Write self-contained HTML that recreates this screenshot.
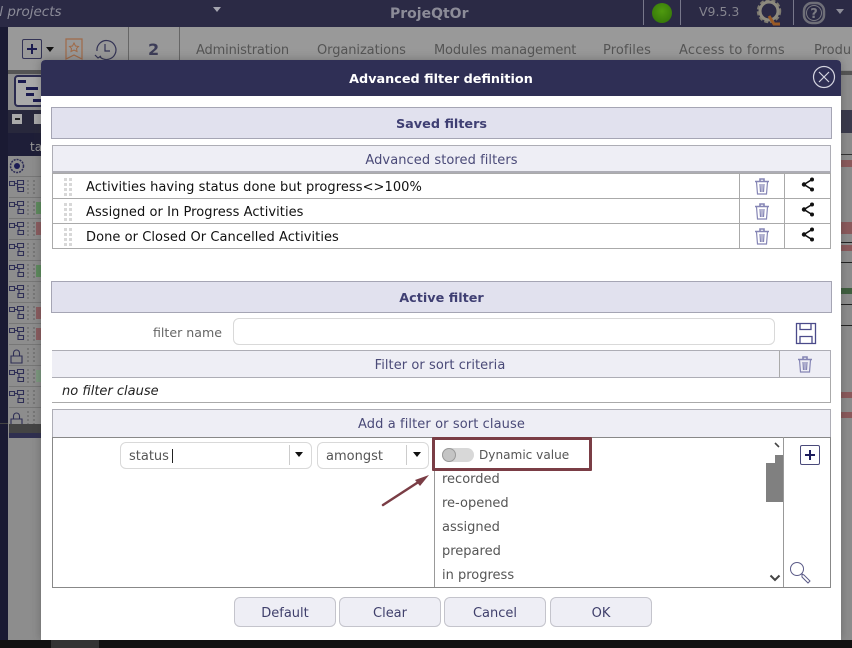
<!DOCTYPE html>
<html><head><meta charset="utf-8"><style>
html,body{margin:0;padding:0}
body{width:852px;height:648px;position:relative;overflow:hidden;background:#8d8d8d;font-family:"DejaVu Sans",sans-serif;font-size:13px;color:#555}
div,span,svg{position:absolute;box-sizing:border-box}
.t{white-space:nowrap;line-height:16px}
.hd{background:#e1e1ee;border:1px solid #a5a5b4;color:#3f3f73;font-weight:bold;text-align:center;line-height:34px;font-size:12.8px}
.sub{background:#eeeef5;border:1px solid #adadb5;color:#4a4a78;text-align:center;letter-spacing:.07px;line-height:29px}
.row{left:52px;width:779px;height:26px;background:#fff;border:1px solid #aaa}
.row .t{left:33px;top:6px;color:#111;letter-spacing:.06px}
.v{top:0;bottom:0;width:1px;background:#aaa}
.btn{top:597px;height:30px;width:102px;background:#eeeef5;border:1px solid #c4c4cc;border-radius:6px;color:#3f3f6b;text-align:center;line-height:31px}
.nav{top:43px;color:#555;white-space:nowrap;line-height:16px}
.opt{left:442px;color:#555;white-space:nowrap;line-height:16px}
.inp{background:#fff;border:1px solid #d9d9d9;border-radius:6px}
.tri{width:0;height:0;border-left:4px solid transparent;border-right:4px solid transparent;border-top:5px solid #111}
.sc{left:9px;width:32px;height:1px;background:#777}
</style></head><body>
<div style="left:0;top:0;width:852px;height:27px;background:#2b2a45"></div>
<div class="t" style="left:-5px;top:4px;font-style:italic;color:#8b8b98;font-size:13.500px">&nbsp;l projects</div>
<div class="tri" style="left:213px;top:7px;border-top-color:#a5a5b0"></div>
<div class="t" style="left:390px;top:6px;font-weight:bold;color:#8c8c98;font-size:14px">ProjeQtOr</div>
<div style="left:643px;top:0;width:1px;height:25px;background:#77778a"></div>
<div style="left:680px;top:0;width:1px;height:25px;background:#77778a"></div>
<div style="left:793px;top:0;width:1px;height:25px;background:#77778a"></div>
<div style="left:652px;top:3px;width:20px;height:20px;border-radius:50%;background:radial-gradient(circle at 50% 40%,#4f9a0f,#2f6f08)"></div>
<div class="t" style="left:699px;top:4px;color:#85858f;font-size:12.500px">V9.5.3</div>
<svg style="left:754px;top:0" width="32" height="27"><circle cx="15" cy="11" r="11" fill="none" stroke="#7d7a70" stroke-width="2.500" stroke-dasharray="4 2"/><circle cx="15" cy="11" r="9" fill="none" stroke="#8d8a7e" stroke-width="3"/><path d="M15 16l5 8h6" stroke="#9a5a25" stroke-width="3" fill="none"/></svg>
<svg style="left:802px;top:0" width="24" height="25"><rect x="2" y="3" width="20" height="20" rx="8" fill="none" stroke="#6f6f78" stroke-width="2.500"/><circle cx="12" cy="13" r="7.500" fill="none" stroke="#7a7a82" stroke-width="1"/><text x="12" y="18" text-anchor="middle" font-family="DejaVu Sans" font-weight="bold" font-size="13" fill="#7a7a82">?</text></svg>
<div class="tri" style="left:836px;top:9px;border-top-color:#8d8d99"></div>

<div style="left:0;top:27px;width:8px;height:621px;background:#1a1a33"></div>
<div style="left:8px;top:27px;width:844px;height:43px;background:#999"></div>
<div style="left:128px;top:27px;width:1px;height:33px;background:#666"></div>
<div style="left:179px;top:27px;width:1px;height:33px;background:#666"></div>
<div style="left:22px;top:39px;width:20px;height:20px;border:1px solid #333355;border-radius:2px"></div>
<svg style="left:22px;top:39px" width="20" height="20"><path d="M10 5v10M5 10h10" stroke="#1c1c50" stroke-width="2"/></svg>
<div class="tri" style="left:46px;top:47px"></div>
<svg style="left:65px;top:38px" width="20" height="22"><path d="M1 1h16v20l-8-4-8 4z" fill="none" stroke="#a06a48" stroke-width="1.200"/><path d="M9 5l1.500 3 3 .5-2 2 .5 3-3-1.500-3 1.500.5-3-2-2 3-.5z" fill="none" stroke="#a06a48"/></svg>
<svg style="left:94px;top:38px" width="24" height="22"><path d="M6 19a9.500 9.500 0 1 0-3-6" fill="none" stroke="#333355" stroke-width="1.200"/><path d="M11 6v7h5M1 17l3 3 3-2" fill="none" stroke="#333355" stroke-width="1.200"/></svg>
<div class="t" style="left:148px;top:42px;font-size:16px;font-weight:bold;color:#3d3d58">2</div>
<div class="nav" style="left:196px;letter-spacing:-.15px">Administration</div>
<div class="nav" style="left:317px;letter-spacing:-.08px">Organizations</div>
<div class="nav" style="left:434px;letter-spacing:-.17px">Modules management</div>
<div class="nav" style="left:603px;letter-spacing:.1px">Profiles</div>
<div class="nav" style="left:679px;letter-spacing:.2px">Access to forms</div>
<div class="nav" style="left:814px">Produ</div>

<div style="left:8px;top:70px;width:33px;height:4px;background:#555"></div>
<div style="left:14px;top:75px;width:30px;height:32px;border:2px solid #2b2b50;border-radius:4px;background:#aaa"></div>
<div style="left:18px;top:80px;width:8px;height:3px;background:#1b1b50"></div>
<div style="left:26px;top:87px;width:12px;height:3px;background:#1b1b50"></div>
<div style="left:26px;top:93px;width:8px;height:3px;background:#1b1b50"></div>
<div style="left:33px;top:99px;width:8px;height:3px;background:#1b1b50"></div>
<div style="left:8px;top:110px;width:33px;height:23px;background:#28283c"></div>
<div style="left:12px;top:114px;width:10px;height:10px;background:#aaa"></div>
<div style="left:15px;top:118px;width:5px;height:2px;background:#222"></div>
<div style="left:34px;top:114px;width:7px;height:10px;background:#aaa"></div>
<div style="left:8px;top:133px;width:33px;height:23px;background:#1e1e38"></div>
<div class="t" style="left:30px;top:139px;color:#999;font-size:12px">ta</div>
<svg style="left:9px;top:157px" width="22" height="18"><circle cx="8" cy="9" r="6.500" fill="none" stroke="#2c2c55" stroke-width="1.500" stroke-dasharray="2 1"/><circle cx="8" cy="9" r="3" fill="#1c1c55"/></svg>
<div class="sc" style="top:176px"></div><div class="sc" style="top:197px"></div><div class="sc" style="top:218px"></div><div class="sc" style="top:239px"></div><div class="sc" style="top:260px"></div><div class="sc" style="top:281px"></div><div class="sc" style="top:302px"></div><div class="sc" style="top:323px"></div><div class="sc" style="top:344px"></div><div class="sc" style="top:365px"></div><div class="sc" style="top:386px"></div><div class="sc" style="top:407px"></div>
<svg style="left:9px;top:180px" width="18" height="248" fill="none" stroke="#2e2e55" stroke-width="1.100">
<path d="M.5 1.500h5v4h-5zM5.500 3.500h3M8.500 .5h6v4h-6zM8.500 4.500v5h.5M9 7.500h5.500v4h-5.500z"/>
<path transform="translate(0,21)" d="M.5 1.500h5v4h-5zM5.500 3.500h3M8.500 .5h6v4h-6zM10 4.500v4M9 8.500h5.500v4h-5.500z"/>
<path transform="translate(0,42)" d="M.5 1.500h5v4h-5zM5.500 3.500h3M8.500 .5h6v4h-6zM10 4.500v4M9 8.500h5.500v4h-5.500z"/>
<path transform="translate(0,63)" d="M.5 1.500h5v4h-5zM5.500 3.500h3M8.500 .5h6v4h-6zM10 4.500v4M9 8.500h5.500v4h-5.500z"/>
<path transform="translate(0,84)" d="M.5 1.500h5v4h-5zM5.500 3.500h3M8.500 .5h6v4h-6zM10 4.500v4M9 8.500h5.500v4h-5.500z"/>
<path transform="translate(0,105)" d="M.5 1.500h5v4h-5zM5.500 3.500h3M8.500 .5h6v4h-6zM10 4.500v4M9 8.500h5.500v4h-5.500z"/>
<path transform="translate(0,126)" d="M.5 1.500h5v4h-5zM5.500 3.500h3M8.500 .5h6v4h-6zM10 4.500v4M9 8.500h5.500v4h-5.500z"/>
<path transform="translate(0,147)" d="M.5 1.500h5v4h-5zM5.500 3.500h3M8.500 .5h6v4h-6zM10 4.500v4M9 8.500h5.500v4h-5.500z"/>
<path transform="translate(0,168)" d="M2 8h11v7h-11zM4.500 8v-3a3 3 0 0 1 6 0v3"/>
<path transform="translate(0,189)" d="M.5 1.500h5v4h-5zM5.500 3.500h3M8.500 .5h6v4h-6zM10 4.500v4M9 8.500h5.500v4h-5.500z"/>
<path transform="translate(0,210)" d="M.5 1.500h5v4h-5zM5.500 3.500h3M8.500 .5h6v4h-6zM10 4.500v4M9 8.500h5.500v4h-5.500z"/>
<path transform="translate(0,231)" d="M2 8h11v7h-11zM4.500 8v-3a3 3 0 0 1 6 0v3"/>
</svg>
<svg style="left:27px;top:178px" width="8" height="248"><defs><pattern id="g" width="6" height="21" patternUnits="userSpaceOnUse"><rect width="2" height="2" y="2" fill="#777"/><rect width="2" height="2" y="6" fill="#777"/><rect width="2" height="2" y="10" fill="#777"/><rect width="2" height="2" y="14" fill="#777"/></pattern></defs><rect width="8" height="248" fill="url(#g)"/></svg>
<div style="left:36px;top:202px;width:5px;height:12px;background:#5e8c5e"></div>
<div style="left:36px;top:222px;width:5px;height:13px;background:#8c5d60"></div>
<div style="left:36px;top:265px;width:5px;height:12px;background:#5e8c5e"></div>
<div style="left:36px;top:307px;width:5px;height:12px;background:#8c5d60"></div>
<div style="left:36px;top:328px;width:5px;height:12px;background:#8c5d60"></div>
<div style="left:36px;top:370px;width:5px;height:12px;background:#7d9a80"></div>
<div style="left:9px;top:424px;width:32px;height:9px;background:#444"></div>
<div style="left:9px;top:433px;width:32px;height:5px;background:#2f2f50"></div>
<div style="left:0;top:423px;width:8px;height:1px;background:#444"></div>

<div style="left:841px;top:71px;width:11px;height:4px;background:#555"></div>
<div style="left:841px;top:110px;width:11px;height:23px;background:#3a3a4c"></div>
<div style="left:841px;top:154px;width:11px;height:1px;background:#333"></div>
<div style="left:841px;top:160px;width:11px;height:7px;background:#8b5a5c"></div>
<div style="left:841px;top:222px;width:11px;height:12px;background:#8b5a5c"></div>
<div style="left:841px;top:242px;width:11px;height:1px;background:#222"></div>
<div style="left:841px;top:245px;width:11px;height:6px;background:#8b5a5c"></div>
<div style="left:841px;top:262px;width:11px;height:1px;background:#222"></div>
<div style="left:841px;top:288px;width:11px;height:6px;background:#3f5f3f"></div>
<div style="left:841px;top:304px;width:11px;height:1px;background:#222"></div>
<div style="left:841px;top:325px;width:11px;height:1px;background:#222"></div>
<div style="left:841px;top:392px;width:11px;height:6px;background:#8b5a5c"></div>
<div style="left:841px;top:412px;width:11px;height:6px;background:#8b5a5c"></div>

<!-- dialog -->
<div style="left:41px;top:60px;width:800px;height:580px;background:#fff;border-radius:4px 4px 0 0;box-shadow:0 0 10px rgba(40,40,40,.35)"></div>
<div style="left:0;top:640px;width:852px;height:8px;background:#111"></div>
<div style="left:51px;top:640px;width:48px;height:8px;background:#333"></div>
<div style="left:41px;top:60px;width:800px;height:36px;background:#2f2f55;border-radius:4px 4px 0 0"></div>
<div class="t" style="left:41px;width:800px;top:72px;text-align:center;color:#fff;font-weight:bold;font-size:12.800px">Advanced filter definition</div>
<svg style="left:812px;top:65px" width="24" height="24"><circle cx="12" cy="12" r="10.500" fill="none" stroke="#d5d5e0" stroke-width="1.200"/><path d="M7 7l10 10M17 7l-10 10" stroke="#d5d5e0" stroke-width="1.200"/></svg>

<div class="hd" style="left:51px;top:107px;width:781px;height:32px">Saved filters</div>
<div class="sub" style="left:52px;top:145px;width:779px;height:28px;border-bottom-width:2px">Advanced stored filters</div>

<div class="row" style="top:173px"><div class="t">Activities having status done but progress&lt;&gt;100%</div><div class="v" style="left:686px"></div><div class="v" style="left:731px"></div></div>
<div class="row" style="top:198px"><div class="t">Assigned or In Progress Activities</div><div class="v" style="left:686px"></div><div class="v" style="left:731px"></div></div>
<div class="row" style="top:223px"><div class="t">Done or Closed Or Cancelled Activities</div><div class="v" style="left:686px"></div><div class="v" style="left:731px"></div></div>

<svg style="left:64px;top:177px" width="10" height="70"><defs><pattern id="d" width="10" height="25" patternUnits="userSpaceOnUse"><path d="M0 1h3v3h-3zM5 1h3v3h-3zM0 6h3v3h-3zM5 6h3v3h-3zM0 11h3v3h-3zM5 11h3v3h-3zM0 16h3v3h-3zM5 16h3v3h-3z" fill="#d8d8d8"/></pattern></defs><rect width="10" height="70" fill="url(#d)"/></svg>
<svg style="left:754px;top:178px" width="16" height="17" fill="none" stroke="#8585b5" stroke-width="1.200"><path d="M1 3.500h14M6 3v-2h4v2" stroke-width="1.600"/><path d="M2.500 4l1 12h9l1-12M6 6l.5 8M8 6v8M10 6l-.5 8"/></svg>
<svg style="left:754px;top:203px" width="16" height="17" fill="none" stroke="#8585b5" stroke-width="1.200"><path d="M1 3.500h14M6 3v-2h4v2" stroke-width="1.600"/><path d="M2.500 4l1 12h9l1-12M6 6l.5 8M8 6v8M10 6l-.5 8"/></svg>
<svg style="left:754px;top:228px" width="16" height="17" fill="none" stroke="#8585b5" stroke-width="1.200"><path d="M1 3.500h14M6 3v-2h4v2" stroke-width="1.600"/><path d="M2.500 4l1 12h9l1-12M6 6l.5 8M8 6v8M10 6l-.5 8"/></svg>
<svg style="left:801px;top:177px" width="14" height="15"><path d="M11 2.500L3 7.500l8 5" fill="none" stroke="#111" stroke-width="1.600"/><circle cx="11" cy="2.500" r="2" fill="#111"/><circle cx="3" cy="7.500" r="2.200" fill="#111"/><circle cx="11" cy="12.500" r="2" fill="#111"/></svg>
<svg style="left:801px;top:202px" width="14" height="15"><path d="M11 2.500L3 7.500l8 5" fill="none" stroke="#111" stroke-width="1.600"/><circle cx="11" cy="2.500" r="2" fill="#111"/><circle cx="3" cy="7.500" r="2.200" fill="#111"/><circle cx="11" cy="12.500" r="2" fill="#111"/></svg>
<svg style="left:801px;top:227px" width="14" height="15"><path d="M11 2.500L3 7.500l8 5" fill="none" stroke="#111" stroke-width="1.600"/><circle cx="11" cy="2.500" r="2" fill="#111"/><circle cx="3" cy="7.500" r="2.200" fill="#111"/><circle cx="11" cy="12.500" r="2" fill="#111"/></svg>

<div class="hd" style="left:51px;top:281px;width:781px;height:32px">Active filter</div>
<div class="t" style="left:153px;top:325px;color:#666;font-size:12.600px">filter name</div>
<div class="inp" style="left:233px;top:318px;width:542px;height:27px"></div>
<svg style="left:795px;top:322px" width="22" height="23" fill="none" stroke="#4a4a8a" stroke-width="1.300"><path d="M1.500 1.500h19v20h-19zM5 1.500v6h11v-6M5 21.500v-7h12v7"/></svg>

<div class="sub" style="left:52px;top:350px;width:779px;height:28px;border-width:1px 1px 1px 0;padding-right:2px;line-height:29px">Filter or sort criteria<div class="v" style="left:727px"></div></div>
<svg style="left:797px;top:356px" width="16" height="17" fill="none" stroke="#8585b5" stroke-width="1.200"><path d="M1 3.500h14M6 3v-2h4v2" stroke-width="1.600"/><path d="M2.500 4l1 12h9l1-12M6 6l.5 8M8 6v8M10 6l-.5 8"/></svg>
<div style="left:52px;top:378px;width:779px;height:25px;border-right:1px solid #aaa;border-bottom:1px solid #aaa"></div>
<div class="t" style="left:62px;top:384px;font-style:italic;color:#222">no filter clause</div>

<div class="sub" style="left:52px;top:409px;width:779px;height:29px;line-height:29px;letter-spacing:.1px">Add a filter or sort clause</div>
<div style="left:52px;top:437px;width:779px;height:151px;border:1px solid #888;background:#fff"></div>
<div style="left:434px;top:437px;width:1px;height:150px;background:#999"></div>
<div style="left:783px;top:437px;width:1px;height:150px;background:#999"></div>

<div class="inp" style="left:120px;top:442px;width:192px;height:27px"></div>
<div class="t" style="left:129px;top:449px;color:#555">status</div>
<div style="left:172px;top:449px;width:1px;height:14px;background:#222"></div>
<div style="left:289px;top:445px;width:1px;height:20px;background:#ccc"></div>
<div class="tri" style="left:295px;top:452px"></div>
<div class="inp" style="left:317px;top:442px;width:112px;height:27px"></div>
<div class="t" style="left:326px;top:449px;color:#555">amongst</div>
<div style="left:406px;top:445px;width:1px;height:20px;background:#ccc"></div>
<div class="tri" style="left:413px;top:452px"></div>

<div style="left:432px;top:437px;width:160px;height:34px;border:3px solid #7a3d45;background:#fff;border-radius:1px"></div>
<div style="left:442px;top:448px;width:32px;height:14px;border-radius:7px;background:#d8d8d8"></div>
<div style="left:442px;top:448px;width:14px;height:14px;border-radius:50%;background:#c4c4c4;border:1px solid #999"></div>
<div class="t" style="left:479px;top:447px;color:#555;font-size:12.100px">Dynamic value</div>
<div class="opt" style="top:472px">recorded</div>
<div class="opt" style="top:496px">re-opened</div>
<div class="opt" style="top:520px">assigned</div>
<div class="opt" style="top:544px">prepared</div>
<div class="opt" style="top:568px">in progress</div>

<div style="left:775px;top:455px;width:8px;height:8px;background:#808080"></div>
<div style="left:766px;top:463px;width:17px;height:39px;background:#808080"></div>
<svg style="left:773px;top:441px" width="8" height="8"><path d="M2 2l4 4" stroke="#444" stroke-width="1.600"/></svg>
<svg style="left:769px;top:574px" width="12" height="8"><path d="M1.500 1.500l4.500 4.500 4.500-4.500" fill="none" stroke="#444" stroke-width="2"/></svg>

<div style="left:800px;top:445px;width:20px;height:20px;border:1px solid #4a4a7a;border-radius:2px"></div>
<svg style="left:800px;top:445px" width="20" height="20"><path d="M10 5v10M5 10h10" stroke="#1c1c5c" stroke-width="2"/></svg>
<svg style="left:789px;top:560px" width="24" height="24" fill="none" stroke="#5b5b88" stroke-width="1"><circle cx="8" cy="9" r="6.500"/><path d="M13 14l2 1 6 6-2 2-6-6z"/></svg>

<div class="btn" style="left:234px">Default</div>
<div class="btn" style="left:339px">Clear</div>
<div class="btn" style="left:444px">Cancel</div>
<div class="btn" style="left:550px">OK</div>

<svg style="left:378px;top:470px" width="56" height="40"><path d="M5 35L42 11" stroke="#7a3d45" stroke-width="2.500" stroke-linecap="round"/><path d="M51 5L37 10l5 6z" fill="#7a3d45"/></svg>
</body></html>
